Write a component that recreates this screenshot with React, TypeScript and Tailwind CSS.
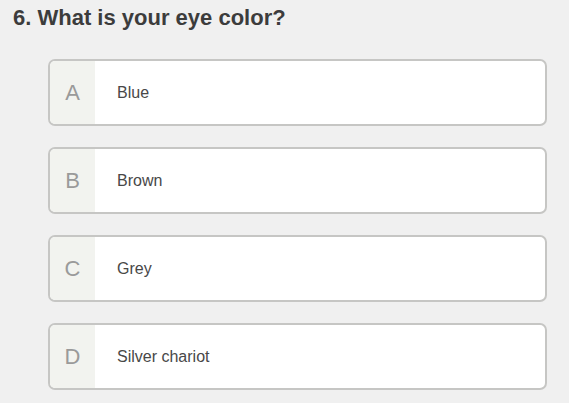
const OPTIONS = [
  { key: "A", label: "Blue" },
  { key: "B", label: "Brown" },
  { key: "C", label: "Grey" },
  { key: "D", label: "Silver chariot" },
];

export default function App() {
  return (
    <div className="min-h-[403px] w-full bg-[#f0f0f0] font-['Liberation_Sans',Arial,sans-serif]">
      <h2 className="pl-[13px] pt-[6px] text-[22px] font-bold leading-[24px] text-[#3c3c3c]">
        6. What is your eye color?
      </h2>
      <div className="ml-[48px] mt-[29px] flex w-[499px] flex-col gap-[21px]">
        {OPTIONS.map((opt) => (
          <button
            key={opt.key}
            className="flex h-[67px] items-stretch overflow-hidden rounded-[7px] border-2 border-[#c6c6c4] bg-white text-left"
          >
            <span className="flex w-[45px] items-center justify-center bg-[#f2f3ef] text-[22px] text-[#9a9a9a]">
              {opt.key}
            </span>
            <span className="flex items-center pl-[22px] text-[16px] text-[#484848]">
              {opt.label}
            </span>
          </button>
        ))}
      </div>
    </div>
  );
}
